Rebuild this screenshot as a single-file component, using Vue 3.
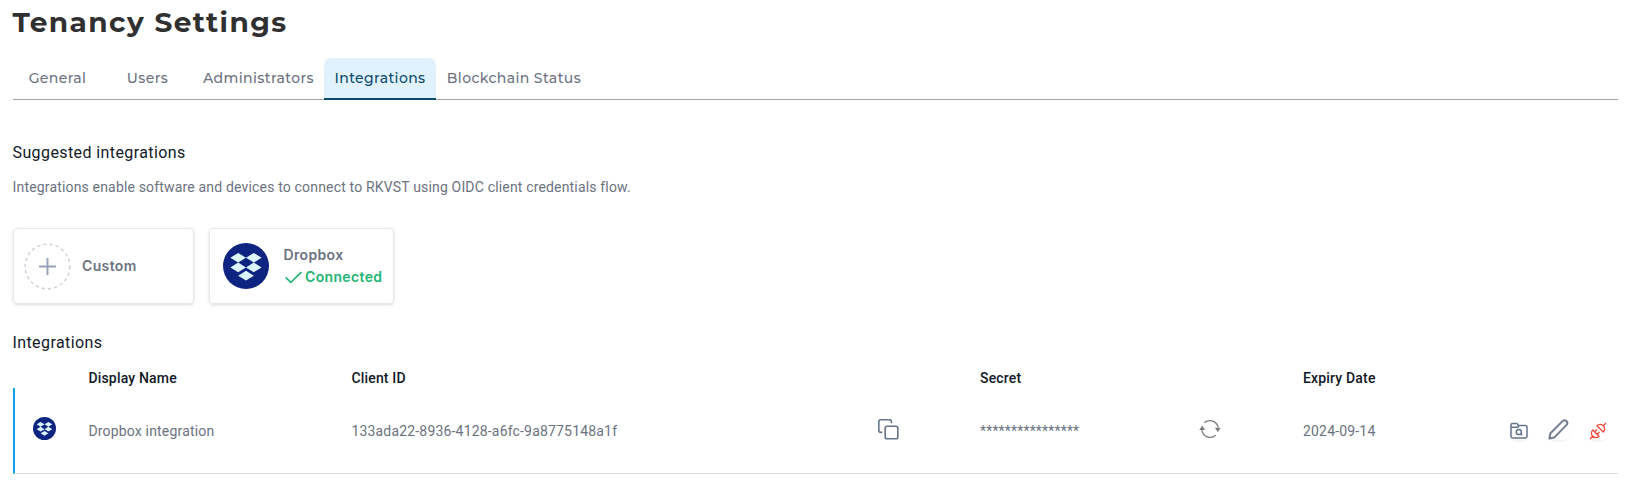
<script setup>
const tabs = ['General', 'Users', 'Administrators', 'Integrations', 'Blockchain Status']
const active = 'Integrations'
const tiles = [
  [33, 32], [67, 32], [33, 53], [67, 53], [50, 71],
].map(([x, y]) => `M${x} ${y - 10.5}l17 10.5-17 10.5-17-10.5z`).join('')
</script>

<template>
  <main class="page">
    <h1>Tenancy Settings</h1>
    <nav class="tabs">
      <a v-for="t in tabs" :key="t" class="tab" :class="[t.split(' ')[0].toLowerCase(), { active: t === active }]"><span>{{ t }}</span></a>
    </nav>

    <h2 class="suggested">Suggested integrations</h2>
    <p class="intro">Integrations enable software and devices to connect to RKVST using OIDC client credentials flow.</p>

    <div class="cards">
      <div class="card custom">
        <svg width="47" height="47" viewBox="0 0 48 48" fill="none">
          <circle cx="24" cy="24" r="22.8" stroke="#cfd0dc" stroke-width="1.5" stroke-dasharray="3.3 3.1" />
          <path d="M24 15.3v17.4M15.3 24h17.4" stroke="#94a3b8" stroke-width="2" />
        </svg>
        <span class="name">Custom</span>
      </div>
      <div class="card dropbox">
        <svg width="46" height="46" viewBox="0 0 100 100">
          <circle cx="50" cy="50" r="50" fill="#0d2481" />
          <path :d="tiles" fill="#dcf6ff" />
        </svg>
        <div class="info">
          <span class="name">Dropbox</span>
          <span class="status">
            <svg width="17" height="13" viewBox="0 0 17 13" fill="none"><path d="M.7 6.4l5.1 5L16.500 1" stroke="#22b573" stroke-width="1.7" /></svg>
            <b>Connected</b>
          </span>
        </div>
      </div>
    </div>

    <h2 class="listing">Integrations</h2>
    <div class="grid head">
      <span></span><span>Display Name</span><span>Client ID</span><span></span><span>Secret</span><span></span><span>Expiry Date</span>
    </div>
    <div class="grid row">
      <svg class="logo" width="23" height="23" viewBox="0 0 100 100">
        <circle cx="50" cy="50" r="50" fill="#0d2481" />
        <path :d="tiles" fill="#dcf6ff" />
      </svg>
      <span>Dropbox integration</span>
      <span>133ada22-8936-4128-a6fc-9a8775148a1f</span>
      <svg class="copy" width="21" height="21" viewBox="0 0 21 21" fill="none" stroke="#64748b" stroke-width="1.6">
        <rect x="7.2" y="7.2" width="12.6" height="12.6" rx="1.8" />
        <path d="M13.4 4.2V2.6a1.8 1.8 0 0 0-1.8-1.8H2.6A1.8 1.8 0 0 0 .8 2.6v9a1.8 1.8 0 0 0 1.8 1.8h1.7" />
      </svg>
      <span>****************</span>
      <svg class="refresh" width="22" height="20" viewBox="0 0 22 20">
        <path d="M5.300 3.800A8.400 8.400 0 0 1 19.200 8.500M16.700 16.200A8.400 8.400 0 0 1 2.800 11" fill="none" stroke="#7b7b7b" stroke-width="1.3" />
        <path d="M15.8 8.800h6l-3 4.200zM.3 11h5.8L3.2 6.500z" fill="#7b7b7b" />
      </svg>
      <span>2024-09-14</span>
      <div class="actions">
        <span class="btn b1">
          <svg width="18" height="18" viewBox="0 0 18 18" fill="none" stroke="#64748b" stroke-width="1.5">
            <path d="M1 14.2V3A1.6 1.6 0 0 1 2.6 1.4h3.7q.8 0 1.2.7l.8 1.3h7A1.7 1.7 0 0 1 17 5.1v9.1a1.7 1.7 0 0 1-1.7 1.7H2.7A1.7 1.7 0 0 1 1 14.2zM1 5.2h7.2l.8-1.8" />
            <circle cx="8.8" cy="10" r="2.6" /><path d="M10.6 11.800l1.600 1.500" />
          </svg>
        </span>
        <span class="btn b2">
          <svg width="21" height="21" viewBox="0 0 21 21" fill="none" stroke="#747d91" stroke-width="2" stroke-linejoin="round">
            <path d="M1.400 19.500l1-5.300L14.800 1.900q1.800-1.500 3.600.2t.2 3.800L6.400 18.400z" />
          </svg>
        </span>
        <span class="btn b3">
          <svg width="18" height="18" viewBox="0 0 18 18" fill="none" stroke="#f04a3a" stroke-width="1.35" stroke-linejoin="round">
            <path d="M1 17l2.700-2.700M14.300 3.700L17 1M3.800 8l6.200 6.200c-1.800 1.800-4.500 1.900-6.200.1S2 9.800 3.800 8zM8 3.800L14.200 10c1.800-1.800 1.900-4.500.1-6.200S9.800 2 8 3.800zM5.700 9.800L8 7.500M8.200 12.300L10.500 10" />
          </svg>
        </span>
      </div>
    </div>
  </main>
</template>

<style scoped>
.page { box-sizing: border-box; width: 1625px; height: 482px; padding: 2px 7px 0 13px; overflow: hidden; background: #fff; font-family: Roboto, sans-serif; color: #6b7280; }
h1 { margin: 0 0 0 -.5px; font: 700 28px/40px Montserrat, Inter, sans-serif; letter-spacing: 1.4px; color: #303030; white-space: nowrap; }
.tabs { display: flex; margin-top: 16px; height: 42px; background: linear-gradient(#a3a3a3, #a3a3a3) 0 41px / 100% 1px no-repeat; }
.tab { box-sizing: border-box; display: flex; justify-content: center; height: 42px; font: 500 14px/40px Montserrat, Inter, sans-serif; letter-spacing: .4px; white-space: nowrap; }
.general { width: 89px; }
.users { width: 91px; }
.administrators { width: 131px; }
.integrations { width: 112px; }
.blockchain { width: 156px; }
.active { color: #0c4a6e; background: #e0f2fe; border-bottom: 2px solid #0c4a6e; border-radius: 8px 8px 0 0; }
h2 { margin: 0 0 0 -.5px; font-weight: 400; font-size: 16px; line-height: 24px; letter-spacing: .4px; color: #111827; }
.suggested { margin-top: 41px; }
.intro { margin: 12px 0 0 -.5px; font-size: 14px; line-height: 20px; letter-spacing: .17px; }
.cards { display: flex; gap: 15px; margin-top: 31px; }
.card { box-sizing: border-box; display: flex; align-items: center; height: 76px; border: 1px solid #e8e8ea; border-radius: 4px; box-shadow: 0 1px 3px rgba(0,0,0,.14); font: 600 14px/22px Inter, sans-serif; letter-spacing: .35px; }
.custom { width: 181px; padding-left: 10px; gap: 11px; }
.dropbox { width: 185px; padding-left: 13px; gap: 14.5px; }
.info { display: flex; flex-direction: column; }
.status { display: flex; align-items: center; gap: 3px; padding-left: 1.5px; color: #22b573; }
.status b { font-weight: 600; }
.listing { margin-top: 27px; }
.grid { display: grid; box-sizing: border-box; font-size: 14px; line-height: 20px; letter-spacing: .18px; }
.head { height: 33px; padding-top: 13px; grid-template-columns: 75.4px 263px 526.6px 102px 220px 103px 1fr; font-weight: 500; color: #111827; }
.row { height: 86px; grid-template-columns: 73.4px 263px 526.6px 102px 220px 103px 207px 1fr; align-items: center; border-left: 2px solid #0ea5e9; border-bottom: 1px solid #dcdcdc; }
.logo { margin: -4px 0 0 17.500px; }
.copy { margin-top: -3px; }
.refresh { margin: -3px 0 0 -.5px; }
.actions { display: flex; align-items: center; }
.btn { display: flex; border-radius: 6px; box-shadow: 0 2px 3px -1px rgba(0,0,0,.08); }
.b2 { margin: -2px 0 0 20px; }
.b3 { margin-left: 20px; }
</style>
